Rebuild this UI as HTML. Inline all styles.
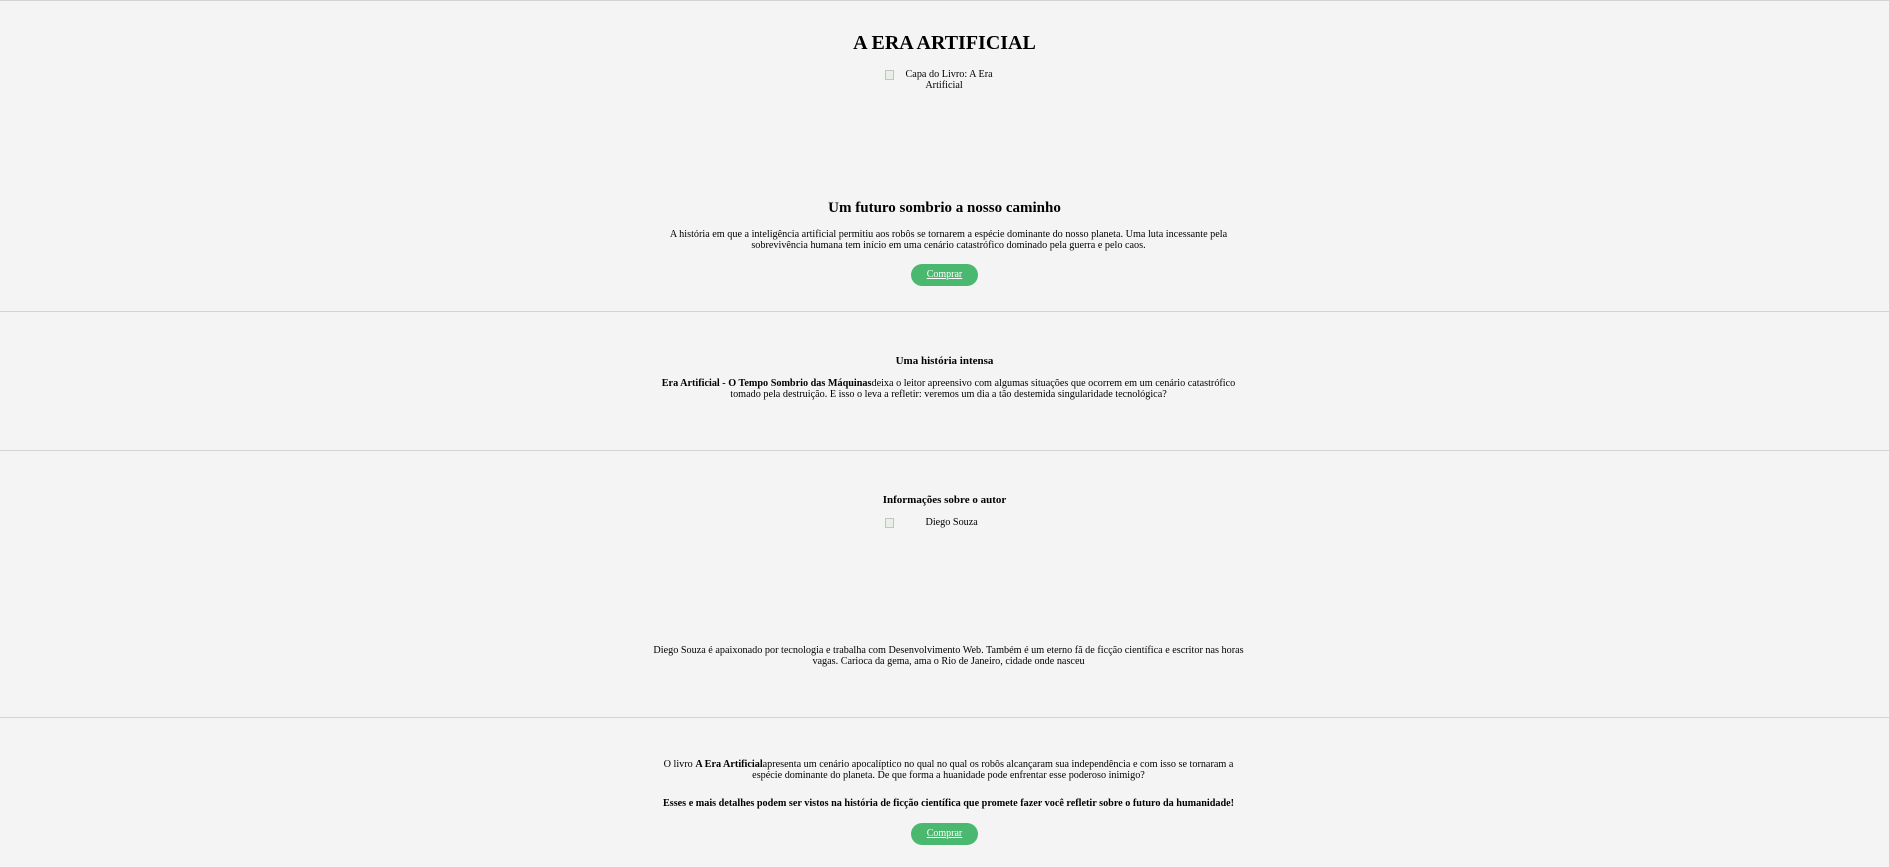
<!DOCTYPE html>
<html><head><meta charset="utf-8"><style>
html,body{margin:0;padding:0;background:#f4f4f4;width:1889px;height:867px;overflow:hidden;font-family:"Liberation Serif",serif;color:#000}
.hr{position:absolute;left:0;width:1889px;height:1px;background:#d4d4d4}
.t{position:absolute;left:0;width:1889px;text-align:center}
.p{position:absolute;left:4px;width:1889px;text-align:center;font-size:10.2px;line-height:11px;white-space:nowrap}
.btn{position:absolute;left:911px;width:67px;height:22px;border-radius:11px;background:#4bb86f;color:#fff;font-size:10px;line-height:22px;text-align:center;text-decoration:underline}
.img{position:absolute;left:885px;width:118px;font-size:10.2px;line-height:11px;text-align:center}
.ic{position:absolute;left:0;top:1px;width:7px;height:8px;border:1px solid #c4c4c4;background:#e8eee8}
</style></head><body>
<div class="hr" style="top:0"></div>
<div class="t" style="top:30px;font-size:20px;font-weight:bold;line-height:26px">A ERA ARTIFICIAL</div>
<div class="img" style="top:69px"><span class="ic"></span>&nbsp;&nbsp;&nbsp;&nbsp;Capa do Livro: A Era<br>Artificial</div>
<div class="t" style="top:198px;font-size:15px;font-weight:bold;line-height:20px">Um futuro sombrio a nosso caminho</div>
<div class="p" style="top:229px">A história em que a inteligência artificial permitiu aos robôs se tornarem a espécie dominante do nosso planeta. Uma luta incessante pela<br>sobrevivência humana tem início em uma cenário catastrófico dominado pela guerra e pelo caos.</div>
<div class="btn" style="top:264px">Comprar</div>
<div class="hr" style="top:311px"></div>
<div class="t" style="top:354px;font-size:11px;font-weight:bold;line-height:14px">Uma história intensa</div>
<div class="p" style="top:378px"><b>Era Artificial - O Tempo Sombrio das Máquinas</b>deixa o leitor apreensivo com algumas situações que ocorrem em um cenário catastrófico<br>tomado pela destruição. E isso o leva a refletir: veremos um dia a tão destemida singularidade tecnológica?</div>
<div class="hr" style="top:450px"></div>
<div class="t" style="top:493px;font-size:11px;font-weight:bold;line-height:14px">Informações sobre o autor</div>
<div class="img" style="top:517px"><span class="ic"></span>&nbsp;&nbsp;&nbsp;&nbsp;&nbsp;&nbsp;Diego Souza</div>
<div class="p" style="top:645px">Diego Souza é apaixonado por tecnologia e trabalha com Desenvolvimento Web. Também é um eterno fã de ficção científica e escritor nas horas<br>vagas. Carioca da gema, ama o Rio de Janeiro, cidade onde nasceu</div>
<div class="hr" style="top:717px"></div>
<div class="p" style="top:759px">O livro <b>A Era Artificial</b>apresenta um cenário apocalíptico no qual no qual os robôs alcançaram sua independência e com isso se tornaram a<br>espécie dominante do planeta. De que forma a huanidade pode enfrentar esse poderoso inimigo?</div>
<div class="p" style="top:798px;font-weight:bold">Esses e mais detalhes podem ser vistos na história de ficção científica que promete fazer você refletir sobre o futuro da humanidade!</div>
<div class="btn" style="top:823px">Comprar</div>
</body></html>
